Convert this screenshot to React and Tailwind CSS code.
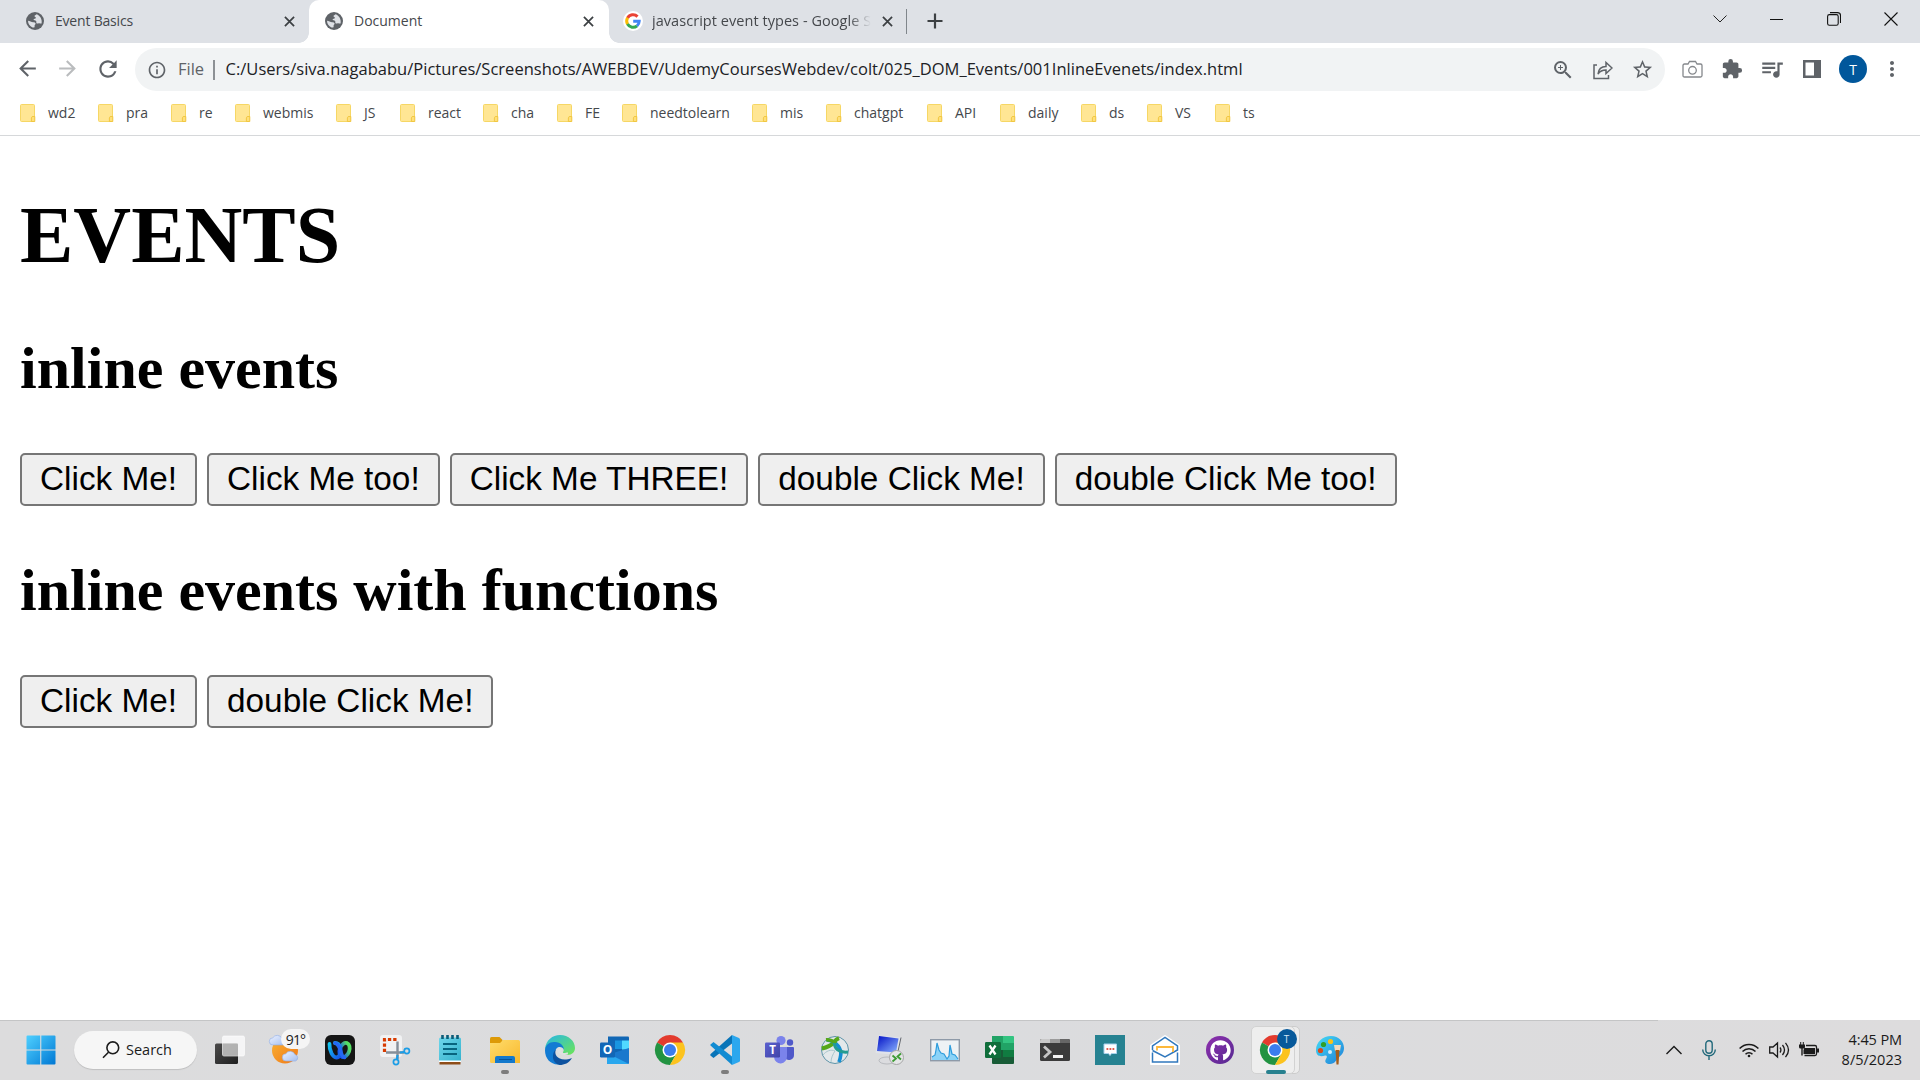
import React from "react";
import {
  MdArrowBack, MdArrowForward, MdRefresh, MdInfoOutline, MdZoomIn, MdStarBorder,
  MdExtension, MdQueueMusic, MdMoreVert,
} from "react-icons/md";
import { FaGithub } from "react-icons/fa";

const UI = "font-['Open_Sans','Noto_Sans',sans-serif]";

const bookmarks = [
  ["wd2", "w-[78px]"], ["pra", "w-[73px]"], ["re", "w-[64px]"], ["webmis", "w-[101px]"],
  ["JS", "w-[64px]"], ["react", "w-[83px]"], ["cha", "w-[74px]"], ["FE", "w-[65px]"],
  ["needtolearn", "w-[130px]"], ["mis", "w-[74px]"], ["chatgpt", "w-[101px]"], ["API", "w-[73px]"],
  ["daily", "w-[81px]"], ["ds", "w-[66px]"], ["VS", "w-[68px]"], ["ts", "w-[60px]"],
];

function FolderMark() {
  return (
    <svg className="h-5 w-4 shrink-0" viewBox="0 0 16 20">
      <rect x="0.5" y="1.5" width="14" height="17" rx="1" fill="#ffe694" stroke="#f6d765" />
      <path d="M12.2 13.5h2.6v5h-3.4v-3.6z" fill="#ffe07a" stroke="#efc43c" strokeWidth="0.9" />
    </svg>
  );
}

function Cross({ className }) {
  return (
    <svg className={className} viewBox="0 0 12 12" fill="none" stroke="#3c4043" strokeWidth="1.9">
      <path d="M1 1l10 10M11 1L1 11" />
    </svg>
  );
}

function Globe() {
  return (
    <svg className="h-[18px] w-[18px] shrink-0" viewBox="0 0 18 18">
      <circle cx="9" cy="9" r="9" fill="#5f6368" />
      <path d="M10.5 2.2c-.6 1-2 .8-2 2 .3 1 1.600.700 1.400 1.900-.3.900-2 .6-2.400 1.500.2 1 2 .6 2.700 1.600.5.900-.3 1.500.4 2.100.8.500 1.600-.3 2.600-.1 1 .1 1.600.700 2.400.2.800-3.700-1.300-8.100-5.100-9.200zM2 8.800c0 3 1.800 5.500 4.500 6.600.6.100 1.500.2 2-.2.400-.9-.2-1.500.3-2.300.5-.6 1-.8.700-1.700-.6-1.300-2.400-.9-3.500-1.200C4.700 9.700 3.500 8.800 2 8.800z" fill="#dee1e6" />
    </svg>
  );
}

function GoogleG() {
  return (
    <svg className="h-5 w-5 shrink-0" viewBox="0 0 20 20">
      <circle cx="10" cy="10" r="10" fill="#fff" />
      <g fill="none" strokeWidth="3">
        <path d="M14.500 5.600A6.300 6.300 0 0 0 4.500 7" stroke="#ea4335" />
        <path d="M4.600 6.800a6.300 6.300 0 0 0 0 6.400" stroke="#fbbc05" />
        <path d="M4.500 13a6.300 6.300 0 0 0 9.600 1.800" stroke="#34a853" />
        <path d="M14 14.900A6.300 6.300 0 0 0 16.200 10.300H10.200" stroke="#4285f4" />
      </g>
    </svg>
  );
}

function TabStrip() {
  return (
    <div className="flex h-[43px] bg-[#dee1e6] text-[14px] text-[#45484c]">
      <div className="flex h-[42px] w-[309px] items-center pl-[26px]">
        <Globe />
        <span className="ml-[11px] w-[229px] pb-px tracking-[-0.2px]">Event Basics</span>
        <Cross className="h-[11px] w-[11px]" />
      </div>
      <div className="relative flex h-[43px] w-[300px] items-center rounded-t-[10px] bg-white pb-px pl-[16px]">
        <div className="absolute bottom-0 left-[-10px] h-[10px] w-[10px] bg-[radial-gradient(circle_at_0_0,#dee1e6_9.5px,#fff_10px)]" />
        <div className="absolute bottom-0 right-[-10px] h-[10px] w-[10px] bg-[radial-gradient(circle_at_100%_0,#dee1e6_9.5px,#fff_10px)]" />
        <Globe />
        <span className="ml-[11px] w-[229px] pb-px">Document</span>
        <Cross className="h-[11px] w-[11px]" />
      </div>
      <div className="flex h-[42px] items-center pl-[14px]">
        <GoogleG />
        <span className="ml-[9px] w-[219px] whitespace-nowrap pb-px text-[14.5px] tracking-[0.05px] [mask-image:linear-gradient(to_right,#000_90%,transparent_100%)]">
          javascript event types - Google S
        </span>
        <Cross className="ml-[11px] h-[11px] w-[11px]" />
        <div className="ml-[13px] h-[25px] w-px bg-[#80868b]" />
        <svg className="ml-[20px] h-4 w-4" viewBox="0 0 16 16" stroke="#3c4043" strokeWidth="2.2">
          <path d="M8 0.500v15M.5 8h15" />
        </svg>
      </div>
      <div className="ml-auto flex h-[37px] items-center pr-[22px]">
        <svg className="h-[14px] w-[14px]" viewBox="0 0 14 14" fill="none" stroke="#222"><path d="M.5 3.500L7 10l6.500-6.500" /></svg>
        <svg className="ml-[43px] h-[14px] w-[14px]" viewBox="0 0 14 14" stroke="#111"><path d="M0 7.500h13" /></svg>
        <svg className="ml-[43px] h-[14px] w-[14px]" viewBox="0 0 14 14" fill="none" stroke="#111" strokeWidth="1.1">
          <rect x=".6" y="2.600" width="10.600" height="10.600" rx="1.800" />
          <path d="M3 .600h7.500a3 3 0 0 1 3 3v7.400" />
        </svg>
        <svg className="ml-[43px] h-[14px] w-[14px]" viewBox="0 0 14 14" stroke="#111" strokeWidth="1.100"><path d="M.5.5l13 13M13.500.500l-13 13" /></svg>
      </div>
    </div>
  );
}

function Toolbar() {
  return (
    <div className="flex h-[53px] items-center bg-white text-[#5f6368]">
      <MdArrowBack className="mb-[2px] ml-[15px] h-[25px] w-[25px]" />
      <MdArrowForward className="mb-[2px] ml-[15px] h-[25px] w-[25px] text-[#babcbe]" />
      <MdRefresh className="mb-px ml-[14.500px] h-[26px] w-[26px]" />
      <div className="ml-[14.500px] flex h-[43px] w-[1530px] items-center rounded-full bg-[#f1f3f4] text-[16.5px]">
        <MdInfoOutline className="ml-[12px] h-5 w-5" />
        <span className="ml-[11px] w-[35px]">File</span>
        <div className="h-5 w-[1.5px] bg-[#8d9195]" />
        <span className="ml-[11px] w-[1020px] whitespace-nowrap tracking-[0.020px] text-[#202124]">
          C:/Users/siva.nagababu/Pictures/Screenshots/AWEBDEV/UdemyCoursesWebdev/colt/025_DOM_Events/001InlineEvenets/index.html
        </span>
        <div className="ml-auto flex items-center pr-[11px]">
          <MdZoomIn className="h-[24px] w-[24px]" />
          <svg className="ml-[18px] h-[20px] w-[20px]" viewBox="0 0 20 20" fill="none" stroke="#5f6368" strokeWidth="1.500">
            <path d="M4 5H1v13.500h14.500V15M5 14c.5-5 3.500-7.500 8-7.500V2.500L19 8l-6 5.500V10c-3.500 0-6 1-8 4z" />
          </svg>
          <MdStarBorder className="ml-[18px] h-[23px] w-[23px]" />
        </div>
      </div>
      <svg className="ml-[17px] h-5 w-[21px]" viewBox="0 0 21 20" fill="none" stroke="#85888c" strokeWidth="1.300">
        <path d="M1 5.500q0-1.500 1.500-1.500h3.500l1.500-2.500h6L15 4h3.500Q20 4 20 5.500v10q0 1.500-1.500 1.500h-16Q1 17 1 15.500z" />
        <circle cx="10.500" cy="10.300" r="3.800" />
      </svg>
      <MdExtension className="mb-[2px] ml-[18px] h-[22px] w-[22px]" />
      <MdQueueMusic className="mb-[2px] ml-[16px] h-[26px] w-[26px]" />
      <svg className="mb-px ml-[18px] h-[18px] w-[18px]" viewBox="0 0 18 18"><path d="M0 0h18v18H0zM2.500 2.500v13H11v-13z" fill="#5f6368" fillRule="evenodd" /></svg>
      <div className="mb-px ml-[18px] flex h-7 w-7 items-center justify-center rounded-full bg-[#01579b] text-[14px] text-white">T</div>
      <MdMoreVert className="mb-px ml-[13px] h-6 w-6" />
    </div>
  );
}

function Bookmarks() {
  return (
    <div className="flex h-[40px] items-center border-b border-[#d6d8da] bg-white pb-[6px] pl-[20px] text-[14px] text-[#45484c]">
      {bookmarks.map(([name, width]) => (
        <div key={name} className={`flex shrink-0 items-center ${width}`}>
          <FolderMark />
          <span className="ml-[12px] whitespace-nowrap">{name}</span>
        </div>
      ))}
    </div>
  );
}

function PageButton({ children }) {
  return (
    <button className="h-[53px] rounded-[5px] border-2 border-[#767676] bg-[#efefef] px-[18px] pb-[2px] text-[33.333px] leading-[47px] text-black">
      {children}
    </button>
  );
}

function Page() {
  return (
    <main className="flex h-[884px] flex-col items-start bg-white px-5 font-['Liberation_Serif',serif] text-black">
      <h1 className="mt-[52.600px] text-[80px] font-bold leading-[92px]">EVENTS</h1>
      <h2 className="mt-[53.400px] text-[60px] font-bold leading-[69px]">inline events</h2>
      <div className="mt-[50px] flex gap-[10px] font-['Liberation_Sans',sans-serif]">
        <PageButton>Click Me!</PageButton>
        <PageButton>Click Me too!</PageButton>
        <PageButton>Click Me THREE!</PageButton>
        <PageButton>double Click Me!</PageButton>
        <PageButton>double Click Me too!</PageButton>
      </div>
      <h2 className="mt-[50px] text-[60px] font-bold leading-[69px]">inline events with functions</h2>
      <div className="mt-[50px] flex gap-[10px] font-['Liberation_Sans',sans-serif]">
        <PageButton>Click Me!</PageButton>
        <PageButton>double Click Me!</PageButton>
      </div>
    </main>
  );
}

function Slot({ children, running }) {
  return (
    <div className="relative flex h-[60px] w-[55px] shrink-0 items-center justify-center">
      <svg className="h-[30px] w-[30px] overflow-visible" viewBox="0 0 30 30">{children}</svg>
      {running && <div className="absolute bottom-[6px] left-[23.5px] h-1 w-2 rounded-full bg-[#7d7d7d]" />}
    </div>
  );
}

function ChromeMark() {
  return (
    <>
      <path d="M15 15L2 7.500A15 15 0 0 1 28 7.500z" fill="#e33b2e" />
      <path d="M15 15L2 7.500A15 15 0 0 0 15 30l6.500-11.200z" fill="#229342" />
      <path d="M15 7.500h13A15 15 0 0 1 15 30l6.500-11.200z" fill="#fcc31e" />
      <circle cx="15" cy="15" r="7.500" fill="#fff" />
      <circle cx="15" cy="15" r="6" fill="#3b7ded" />
    </>
  );
}

function Cloud({ transform }) {
  return (
    <path transform={transform} d="M4 10a3.600 3.600 0 0 1-.2-7.200A5.200 5.200 0 0 1 13 3.500a3.400 3.400 0 0 1 .5 6.500z" fill="url(#cloud)" stroke="#8fabe3" strokeWidth=".6" />
  );
}

function Gradients() {
  const defs = [
    ["win", "#4fd0ff", "#0078d4"], ["sun", "#f9b233", "#f07818"], ["cloud", "#eef3ff", "#a5bff0"],
    ["note", "#6fd6ea", "#35b2ce"], ["fold", "#ffdc6b", "#f8b92e"],
    ["edge", "#25b6e8", "#6ee653"], ["screen", "#0210c5", "#8bb4ff"], ["teams", "#5b60cf", "#4044a8"],
    ["paint", "#46dcf5", "#1e7fd8"], ["purple", "#8f2fae", "#552a91"], ["dark", "#4a4a4a", "#1f1f1f"],
    ["webexl", "#13c8f0", "#1450e8"], ["webexr", "#1463f3", "#57e05e"],
  ];
  return (
    <svg className="absolute h-0 w-0">
      <defs>
        {defs.map(([id, a, b]) => (
          <linearGradient key={id} id={id} x1="0" y1="0" x2="1" y2="1">
            <stop offset="0" stopColor={a} /><stop offset="1" stopColor={b} />
          </linearGradient>
        ))}
        <linearGradient id="loop" x1="0" y1="1" x2="0.7" y2="0">
          <stop offset="0.25" stopColor="#1650ee" /><stop offset="0.9" stopColor="#55df62" />
        </linearGradient>
      </defs>
    </svg>
  );
}

function Taskbar() {
  return (
    <footer className="relative flex h-[60px] bg-[linear-gradient(90deg,#dcdcdd,#dbdcde_50%,#dddcdd)] pl-[13.500px]">
      <div className="absolute left-0 top-0 h-px w-[1658px] bg-[#c4c5c6]" />
      <Gradients />
      <Slot>
        <g fill="url(#win)">
          <path d="M.5 1.500q0-1 1-1h12.700v14H.5zM15.300.500H28.500q1 0 1 1v13H15.300zM.5 15.500h13.700v14H1.500q-1 0-1-1zM15.300 15.500h14.200v13q0 1-1 1H15.300z" />
        </g>
      </Slot>
      <div className="ml-[5.5px] mt-[11px] flex h-[38px] w-[123px] items-center rounded-full bg-[#f6f6f6] pl-[28px] text-[14.5px] text-[#1b1b1b] shadow-[0_1px_1px_#0002]">
        <svg className="h-[18px] w-[18px]" viewBox="0 0 18 18" fill="none" stroke="#1b1b1b" strokeWidth="1.600">
          <circle cx="10.800" cy="6.800" r="5.900" /><path d="M6.500 11.200L1 16.700" />
        </svg>
        <span className="ml-[6px] pb-px">Search</span>
      </div>
      <div className="ml-[5.5px] flex">
        <Slot>
          <rect x="0" y="8.500" width="23" height="20.500" rx="1.500" fill="url(#dark)" />
          <rect x="7.500" y="1" width="22" height="20" rx="1.500" fill="#fff" fillOpacity=".72" stroke="#fff" strokeOpacity=".6" />
          <path d="M8 8.500h15v12.500H8z" fill="#9a9a9a" fillOpacity=".45" />
        </Slot>
        <div className="relative">
          <Slot>
            <circle cx="15" cy="15.500" r="13" fill="url(#sun)" />
            <Cloud transform="translate(-1 0)" />
            <Cloud transform="translate(12 16)" />
          </Slot>
          <div className="absolute left-[23.5px] top-[9px] flex h-[20px] w-[29px] items-center justify-center rounded-full bg-[#f5f5f5] text-[14px] tracking-[-0.8px] text-[#222]">91°</div>
        </div>
        <Slot>
          <rect width="30" height="30" rx="6" fill="#151515" />
          <ellipse cx="19.500" cy="15" rx="4.800" ry="7.300" transform="rotate(20 19.500 15)" fill="none" stroke="url(#loop)" strokeWidth="3.800" />
          <path d="M4.500 9c-.3 7 3.500 13.500 6.800 13.500 3.700 0 5-5 4.200-9-.8-3.600-3-5.500-5.500-5.500" fill="none" stroke="url(#webexl)" strokeWidth="3.800" strokeLinecap="round" />
          <path d="M10 8c4 1 5 6 6 9.500.6 2 1.500 4.500 3.500 5" fill="none" stroke="#2568f3" strokeWidth="3.600" strokeLinecap="round" />
        </Slot>
        <Slot>
          <rect x="0" y="0" width="22" height="22" rx="3" fill="#f1f2f3" />
          <path d="M4.500 17V4.500H17" fill="none" stroke="#d83b01" strokeWidth="3.200" strokeDasharray="3.300 2" />
          <path d="M17.500 6.500V24M6 17.500h18" stroke="#858f99" strokeWidth="2.400" />
          <circle cx="26.800" cy="16" r="2.600" fill="none" stroke="#1c9de6" strokeWidth="1.700" />
          <circle cx="16" cy="27" r="2.600" fill="none" stroke="#1c9de6" strokeWidth="1.700" />
          <path d="M20 17.500l4.500-.5M17.500 20l-.5 4.500" stroke="#1c9de6" strokeWidth="2.200" />
        </Slot>
        <Slot>
          <path d="M4.500 25h21v4.500h-21z" fill="#8e4d19" /><path d="M4 24h22v3H4z" fill="#fff" />
          <path d="M4 4q0-1.500 1.500-1.500h19Q26 2.500 26 4v21.500H4z" fill="url(#note)" />
          <path d="M7.500 0v4M12.500 0v4M17.500 0v4M22.500 0v4" stroke="#0b5d79" strokeWidth="2.600" />
          <path d="M8 9h14M8 14h14M8 19h14" stroke="#08647f" strokeWidth="1.800" />
        </Slot>
        <Slot running>
          <path d="M0 3.500Q0 2 1.500 2h8l3 3v5H0z" fill="#dd9a07" />
          <path d="M0 8h10l3-3h15.500Q30 5 30 6.500V28H1.500Q0 28 0 26.500z" fill="url(#fold)" />
          <path d="M5 28v-5q0-2 2-2h16q2 0 2 2v5z" fill="#1479cc" /><path d="M9 24.500h13" stroke="#07549a" />
        </Slot>
        <Slot>
          <path d="M0 14C1 5 7.500 0 15 0c8.500 0 15 6 15 13 0 4-3 7-7.500 7-3.500 0-5.500-1.500-4-4 1-2-.5-5-4.500-5C8 11 4 10 0 14z" fill="url(#edge)" />
          <path d="M0 15.500C0 10 5 6.500 10 7c5.500.3 9 4 9 8-1-3-5-4-7.500-1.500C8 17 10 25 18 28.500 8 32 0 25 0 15.500z" fill="#127bd3" />
          <path d="M11 14c-3 7 4 13.500 16 9-3 5-7.500 7-12.500 7C7 28 6 19 11 14z" fill="#0d529f" />
          <path d="M11.500 15c1.500-4 6.500-3.500 7 0 .3 1.500-2.500 2.500 1 4.500 3 1.200 5 .5 7.500-.5l1 3c-7 3.500-17-1-16.500-7z" fill="#dfe0e1" transform="translate(5 5) scale(.65)" />
        </Slot>
        <Slot>
          <path d="M8 1.500h20q1 0 1 1V17H8z" fill="#1067b5" />
          <path d="M15 5.500h7v9h-7z" fill="#1995e1" /><path d="M22 5.500h7v9h-7z" fill="#51d9ff" /><path d="M8 14h14v6H8z" fill="#0f65b3" />
          <path d="M7 20l22-7v15q0 1-1 1H8q-1 0-1-1z" fill="#1a78cd" /><path d="M7 18l22 11H8q-1 0-1-1z" fill="#29a7ee" />
          <rect x="0" y="7.500" width="15" height="15" rx="1.200" fill="#1267b7" />
          <text x="7.500" y="19" textAnchor="middle" fontSize="12" fontWeight="700" fill="#fff">O</text>
        </Slot>
        <Slot><ChromeMark /></Slot>
        <Slot running>
          <path d="M22 0v8.500L3.500 23 .4 20.500Q0 19.800.6 19z" fill="#0874b8" />
          <path d="M.5 10.500Q0 9.800.8 9.200L3.500 7 22 21.500V30z" fill="#118bd2" />
          <path d="M22 0l7 3q1 .5 1 1.500v21q0 1-1 1.500l-7 3z" fill="#2ba7ee" />
        </Slot>
        <Slot>
          <circle cx="16" cy="5.500" r="4.600" fill="#7b83eb" /><circle cx="25" cy="7.500" r="3.200" fill="#5059c9" />
          <path d="M20 12h8q1 0 1 1v7a5 5 0 0 1-9 3z" fill="#5059c9" />
          <path d="M9 12h13v9a6.500 7 0 0 1-13 1z" fill="#7b83eb" />
          <rect x="0" y="7.500" width="15" height="15" rx="1.200" fill="url(#teams)" />
          <text x="7.500" y="19" textAnchor="middle" fontSize="11.500" fontWeight="700" fill="#fff">T</text>
        </Slot>
        <Slot>
          <circle cx="15" cy="15" r="13.500" fill="#e3e8ea" stroke="#5c93a8" />
          <path d="M3 20c3-4 8-6 12-4-2 3-4 7-4 11" fill="none" stroke="#a9c6cc" />
          <path d="M1.800 13.500C6 12.500 11 10.500 13.500 8 15 6 15.500 4.500 19 3.200" fill="none" stroke="#55a719" strokeWidth="4" />
          <path d="M6.500 5C10 5 18 7.500 20.500 15.500c1 3.500.5 6-1.500 11.500" fill="none" stroke="#158ed2" strokeWidth="3.600" />
          <path d="M6 4.800C9.500 4.500 13 6 16 8.500" fill="none" stroke="#55a719" strokeWidth="3.600" />
          <path d="M14.500 8c-.5 5 4 10 13.500 9" fill="none" stroke="#249c92" strokeWidth="3" />
        </Slot>
        <Slot>
          <ellipse cx="12" cy="25.500" rx="8" ry="3.500" fill="#dbdcdf" stroke="#a8abb0" strokeWidth=".7" />
          <path d="M3.500.500L26 2.500l-3 17.500L.5 18z" fill="#e0e3ea" />
          <path d="M4 1L23.500 3.500 21 17.500 2 16z" fill="url(#screen)" />
          <path d="M26 2.500l-4 18.500" stroke="#62666c" />
          <circle cx="21.500" cy="22.500" r="7" fill="#e5e6e7" stroke="#a6a6a6" />
          <path d="M17.500 20.500l3.500 3-3.500 3M26 18.500l-3.500 3 3.500 3" fill="none" stroke="#3d9c33" strokeWidth="1.800" />
        </Slot>
        <Slot>
          <rect x=".7" y="4.700" width="28.600" height="21" fill="#eef2f5" stroke="#8e9aa8" strokeWidth="1.400" />
          <path d="M2 22l3-2 1-5 1-7 2 7 2 3 3 1 3 5 2-3 1-11 2 9 3 1 3 4v1H2z" fill="#8bd3f8" />
          <path d="M2 22l3-2 1-5 1-7 2 7 2 3 3 1 3 5 2-3 1-11 2 9 3 1 3 4" fill="none" stroke="#2e9cdc" strokeWidth="1.200" />
        </Slot>
        <Slot>
          <path d="M7 1h11v14H7z" fill="#21a366" /><path d="M18 2V1h10q1 0 1 1v6H18z" fill="#33c481" /><path d="M18 8h11v7H18z" fill="#21a366" />
          <path d="M7 15h11v14H8q-1 0-1-1z" fill="#185c37" /><path d="M18 15h11v7H18z" fill="#107c41" /><path d="M18 22h11v6q0 1-1 1H18z" fill="#185c37" />
          <rect x="0" y="7" width="16" height="16" rx="1.200" fill="#0f6e3b" />
          <path d="M4.500 10.500l6 9M10.500 10.500l-6 9" stroke="#fff" strokeWidth="2.300" />
        </Slot>
        <Slot>
          <rect y="4" width="30" height="22" rx="1.500" fill="#3b3b3b" />
          <path d="M1.500 4H10v4H0V5.500Q0 4 1.500 4z" fill="#c9c9c9" /><path d="M10 4h10v4H10z" fill="#9b9b9b" /><path d="M20 4h8.500Q30 4 30 5.500V8H20z" fill="#666" />
          <path d="M4 11.500l6 5.500-6 5.500" fill="none" stroke="#c4c4c4" strokeWidth="2.800" /><path d="M13 21.500h10" stroke="#f2f2f2" strokeWidth="3" />
        </Slot>
        <Slot>
          <path d="M0 0h30v30H0z" fill="#268291" />
          <path d="M9 9h12.500v9.500h-5L15 20.500l-1.500-2H9z" fill="#fff" stroke="#a9d3ee" />
          <path d="M11.500 14h1.800M14.500 14h1.800M17.500 14h1.800" stroke="#e25a4e" strokeWidth="2" />
        </Slot>
        <Slot>
          <path d="M15 1l14 9.500V29H1V10.500z" fill="#fff" stroke="#fff" strokeWidth="2" strokeLinejoin="round" />
          <path d="M2.500 15v-4L15 2.500 27.500 11v4L15 22 2.500 15.500M2.500 17.500V27h25V17.500" fill="none" stroke="#3078bd" strokeWidth="1.500" />
          <path d="M7 15.500v-3.500h16v5" fill="none" stroke="#fcb83c" strokeWidth="1.800" />
        </Slot>
        <div className="relative">
          <Slot><circle cx="15" cy="15" r="14" fill="url(#purple)" /></Slot>
          <FaGithub className="absolute left-[17px] top-[19.500px] h-[21px] w-[21px] text-white" />
        </div>
        <div className="relative">
          <div className="absolute left-[8px] top-[6px] h-[48px] w-[44px] rounded-[5px] border border-[#ccc] bg-[#ececec]" />
          <div className="absolute left-[3.500px] top-[6px] h-[48px] w-[44px] rounded-[5px] border border-[#d2d2d2] bg-[#eeeeee]" />
          <Slot><ChromeMark /></Slot>
          <div className="absolute left-[29px] top-[9px] flex h-5 w-5 items-center justify-center rounded-full bg-[#07599a] text-[10px] text-[#d5e6f4]">T</div>
          <div className="absolute left-[18px] top-[50px] h-1 w-5 rounded-full bg-[#28818f]" />
        </div>
        <Slot>
          <path d="M1 15C1 7 8 1 16 1s13 6 13 12-4 8-6 10-3 6-8 6c-3.500 0-6-2-4-5 1.500-2.500 1-4-1-3.500-3 1-9 2-9-5.500z" fill="url(#paint)" />
          <circle cx="5.500" cy="15.500" r="2.600" fill="#d94b1b" /><circle cx="8.500" cy="9.500" r="2.600" fill="#2e9f28" /><circle cx="15.500" cy="6.500" r="2.600" fill="#f8c21b" /><circle cx="15" cy="17" r="2" fill="#d3eefc" />
          <path d="M19 10h7l-1 6h-5z" fill="#f1d8bc" /><path d="M20.500 15h4L23.500 29.500h-2z" fill="#a55d1b" />
        </Slot>
      </div>
      <div className="ml-auto flex items-center pr-[18px]">
        <svg className="h-[10px] w-[16px]" viewBox="0 0 16 10" fill="none" stroke="#1b1b1b" strokeWidth="1.400"><path d="M.5 9L8 1.500 15.500 9" /></svg>
        <svg className="ml-[20px] h-[20px] w-[14px]" viewBox="0 0 14 20" fill="none" stroke="#22697b" strokeWidth="1.400">
          <rect x="3.800" y=".7" width="6.400" height="12.500" rx="3.200" /><path d="M.7 9.500a6.300 6.300 0 0 0 12.600 0M7 16v4" />
        </svg>
        <svg className="ml-[23px] h-[16px] w-[20px]" viewBox="0 0 20 16" fill="none" stroke="#1b1b1b" strokeWidth="1.500">
          <path d="M.6 6.500a13 13 0 0 1 18.800 0M3.500 9.500a9 9 0 0 1 13 0M6.500 12.300a5 5 0 0 1 7 0" /><circle cx="10" cy="14" r="1.300" fill="#1b1b1b" stroke="none" />
        </svg>
        <svg className="ml-[10px] h-[18px] w-[21px]" viewBox="0 0 21 18" fill="none" stroke="#1b1b1b" strokeWidth="1.300">
          <path d="M.7 6H4l4.500-4v14L4 12H.7zM11 6.500q1.800 2.500 0 5M13.500 4q4 5 0 10M16.500 1.800q6 7.200 0 14.400" />
        </svg>
        <svg className="ml-[9px] h-[18px] w-[20px]" viewBox="0 0 20 18">
          <path d="M7 4.500h9q1.500 0 1.500 1.500v7q0 1.500-1.500 1.500H5.500" fill="none" stroke="#1b1b1b" strokeWidth="1.300" />
          <path d="M5.500 7h10.500v6H4.500V9zM18 7.500h2v4h-2zM0 3.500h1.200V1h1v2.500h1.600V1h1v2.500H6V6Q6 7.500 4.500 7.500H3.700V14.500H2.300V7.500H1.500Q0 7.500 0 6z" fill="#1b1b1b" />
        </svg>
        <div className="ml-[20px] w-[63px] whitespace-nowrap text-right text-[14.500px] leading-5 text-[#1b1b1b]">
          <div className="tracking-[-0.1px]">4:45 PM</div>
          <div>8/5/2023</div>
        </div>
      </div>
    </footer>
  );
}

export default function App() {
  return (
    <div className={`flex h-[1080px] w-[1920px] flex-col overflow-hidden bg-white ${UI}`}>
      <TabStrip />
      <Toolbar />
      <Bookmarks />
      <Page />
      <Taskbar />
    </div>
  );
}
